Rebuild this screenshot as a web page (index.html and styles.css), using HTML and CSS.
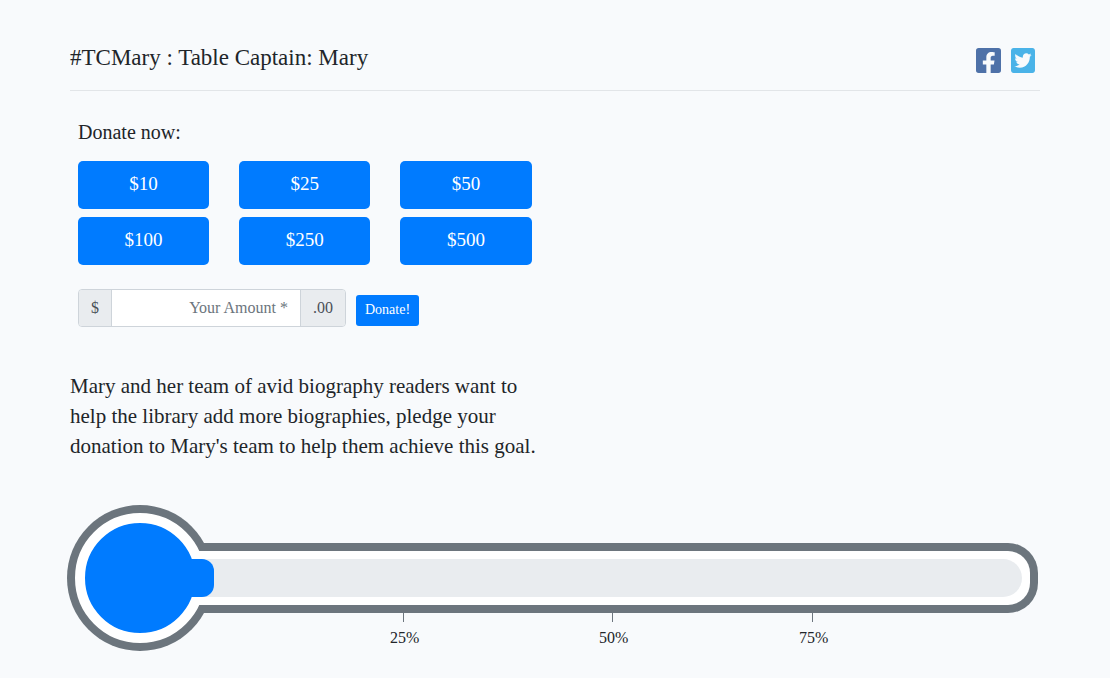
FILE: index.html
```html
<!DOCTYPE html>
<html lang="en">
<head>
<meta charset="utf-8">
<meta name="viewport" content="width=device-width, initial-scale=1">
<title>Table Captain: Mary</title>
<link rel="stylesheet" href="styles.css">
</head>
<body>
<main class="page">
  <header class="header">
    <h1 class="title">#TCMary : Table Captain: Mary</h1>
    <nav class="social">
      <a class="facebook" href="#" aria-label="Share on Facebook">
        <svg viewBox="0 32 448 448" width="25" height="25"><path fill="currentColor" d="M400 32H48A48 48 0 0 0 0 80v352a48 48 0 0 0 48 48h137.250V327.690h-63V256h63v-54.640c0-62.150 37-96.480 93.670-96.480 27.140 0 55.520 4.840 55.520 4.840v61h-31.270c-30.810 0-40.420 19.120-40.420 38.730V256h68.780l-11 71.690h-57.780V480H400a48 48 0 0 0 48-48V80a48 48 0 0 0-48-48z"/></svg>
      </a>
      <a class="twitter" href="#" aria-label="Share on Twitter">
        <svg viewBox="0 32 448 448" width="24" height="25" preserveAspectRatio="none"><path fill="currentColor" d="M400 32H48C21.500 32 0 53.500 0 80v352c0 26.500 21.500 48 48 48h352c26.500 0 48-21.500 48-48V80c0-26.500-21.500-48-48-48zm-48.900 158.800c.2 2.800.2 5.700.2 8.500 0 86.700-66 186.600-186.600 186.600-37.200 0-71.700-10.800-100.700-29.400 5.300.6 10.400.8 15.800.8 30.700 0 58.900-10.400 81.400-28-28.800-.6-53-19.500-61.300-45.500 10.100 1.500 19.200 1.500 29.600-1.200-30-6.100-52.500-32.500-52.500-64.400v-.8c8.700 4.900 18.900 7.900 29.600 8.300a65.447 65.447 0 0 1-29.200-54.600c0-12.200 3.200-23.400 8.900-33.100 32.300 39.800 80.800 65.800 135.200 68.600-9.300-44.500 24-80.600 64-80.600 18.900 0 35.900 7.900 47.900 20.700 14.800-2.800 29-8.300 41.600-15.800-4.900 15.200-15.200 28-28.800 36.100 13.200-1.400 26-5.100 37.800-10.200-8.900 13.100-20.100 24.700-32.900 34z"/></svg>
      </a>
    </nav>
  </header>

  <form class="donate">
    <h2 class="donate-title">Donate now:</h2>
    <div class="amounts">
      <button class="button" type="button">$10</button>
      <button class="button" type="button">$25</button>
      <button class="button" type="button">$50</button>
      <button class="button" type="button">$100</button>
      <button class="button" type="button">$250</button>
      <button class="button" type="button">$500</button>
    </div>
    <div class="custom">
      <div class="input-group">
        <label class="addon" for="amount">$</label>
        <input class="amount" id="amount" type="text" placeholder="Your Amount *">
        <span class="addon addon-end">.00</span>
      </div>
      <button class="button button-small" type="button">Donate!</button>
    </div>
  </form>

  <p class="story">Mary and her team of avid biography readers want to help the library add more biographies, pledge your donation to Mary's team to help them achieve this goal.</p>

  <section class="progress" aria-label="Donation progress">
    <div class="thermometer">
      <div class="bulb"><div class="core"></div></div>
      <div class="tube"><div class="track"><div class="fill"></div></div></div>
    </div>
    <div class="scale">
      <span class="mark">25%</span>
      <span class="mark">50%</span>
      <span class="mark">75%</span>
    </div>
  </section>
</main>
</body>
</html>
```

FILE: styles.css
```css
*,
*::before,
*::after {
  box-sizing: border-box;
}

body {
  margin: 0;
  background: #f8fafc;
  color: #212529;
  font-family: "Gentium Book Basic", "Liberation Serif", serif;
  font-size: 16px;
  line-height: 24px;
}

.page {
  padding: 40px 70px 24px;
}

.header {
  display: flex;
  justify-content: space-between;
  align-items: center;
  height: 51px;
  padding: 0 5px 14px 0;
  border-bottom: 1px solid #e2e5e8;
}

.title {
  margin: 0;
  font-size: 23px;
  font-weight: 400;
  line-height: 32px;
}

.social {
  display: flex;
  gap: 10px;
  padding-top: 4px;
}

.social a,
.social svg {
  display: block;
}

.facebook {
  color: #4e71a8;
}

.twitter {
  color: #4ab3e8;
}

.donate {
  width: 48%;
  padding: 28px 4px 0 8px;
}

.donate-title {
  margin: 0 0 16px;
  font-size: 20px;
  font-weight: 400;
  line-height: 26px;
}

.amounts {
  display: grid;
  grid-template-columns: repeat(3, 1fr);
  gap: 8px 30px;
}

.button {
  height: 48px;
  padding: 0 9px 2px;
  border: 0;
  border-radius: 5px;
  background: #007bff;
  color: #fff;
  font-family: inherit;
  font-size: 19px;
}

.custom {
  display: flex;
  align-items: flex-end;
  gap: 10px;
  margin-top: 24px;
}

.button-small {
  height: 31px;
  margin-bottom: 1px;
  border-radius: 3px;
  font-size: 14px;
}

.input-group {
  display: flex;
  width: 268px;
  height: 38px;
  border: 1px solid #ced4da;
  border-radius: 4px;
  overflow: hidden;
}

.addon {
  padding: 6px 12px;
  background: #e9ecef;
  color: #495057;
  border-right: 1px solid #ced4da;
}

.addon-end {
  border-right: 0;
  border-left: 1px solid #ced4da;
}

.amount {
  flex: 1;
  min-width: 0;
  padding: 0 12px;
  border: 0;
  background: #fff;
  color: #495057;
  font: inherit;
  text-align: right;
}

.amount::placeholder {
  color: #6c757d;
}

.story {
  width: 50%;
  margin: 44px 0 0;
  font-size: 21px;
  line-height: 30px;
}

.progress {
  margin: 44px 2px 0 -3px;
}

.thermometer {
  display: flex;
  align-items: center;
}

.bulb {
  flex: none;
  width: 146px;
  height: 146px;
  padding: 8px;
  border-radius: 50%;
  background: #6c757d;
}

.core {
  position: relative;
  z-index: 1;
  height: 130px;
  border: 10px solid #fff;
  border-radius: 50%;
  background: #007bff;
}

.tube {
  flex: 1;
  height: 70px;
  margin-left: -23px;
  padding: 8px 8px 8px 0;
  border: solid #6c757d;
  border-width: 8px 8px 8px 0;
  border-radius: 0 30px 30px 0;
  background: #fff;
}

.track {
  height: 38px;
  border-radius: 0 19px 19px 0;
  background: #e9ecef;
}

.fill {
  position: relative;
  z-index: 2;
  width: 24px;
  height: 38px;
  border-radius: 0 12px 12px 0;
  background: #007bff;
}

.scale {
  display: grid;
  grid-template-columns: 323fr 209fr 200fr 239fr;
  margin-top: -38px;
}

.mark::before {
  content: "";
  display: block;
  width: 1px;
  height: 9px;
  margin: 0 0 4px 13px;
  background: #6c757d;
}

.mark:first-child {
  grid-column: 2;
}
```
